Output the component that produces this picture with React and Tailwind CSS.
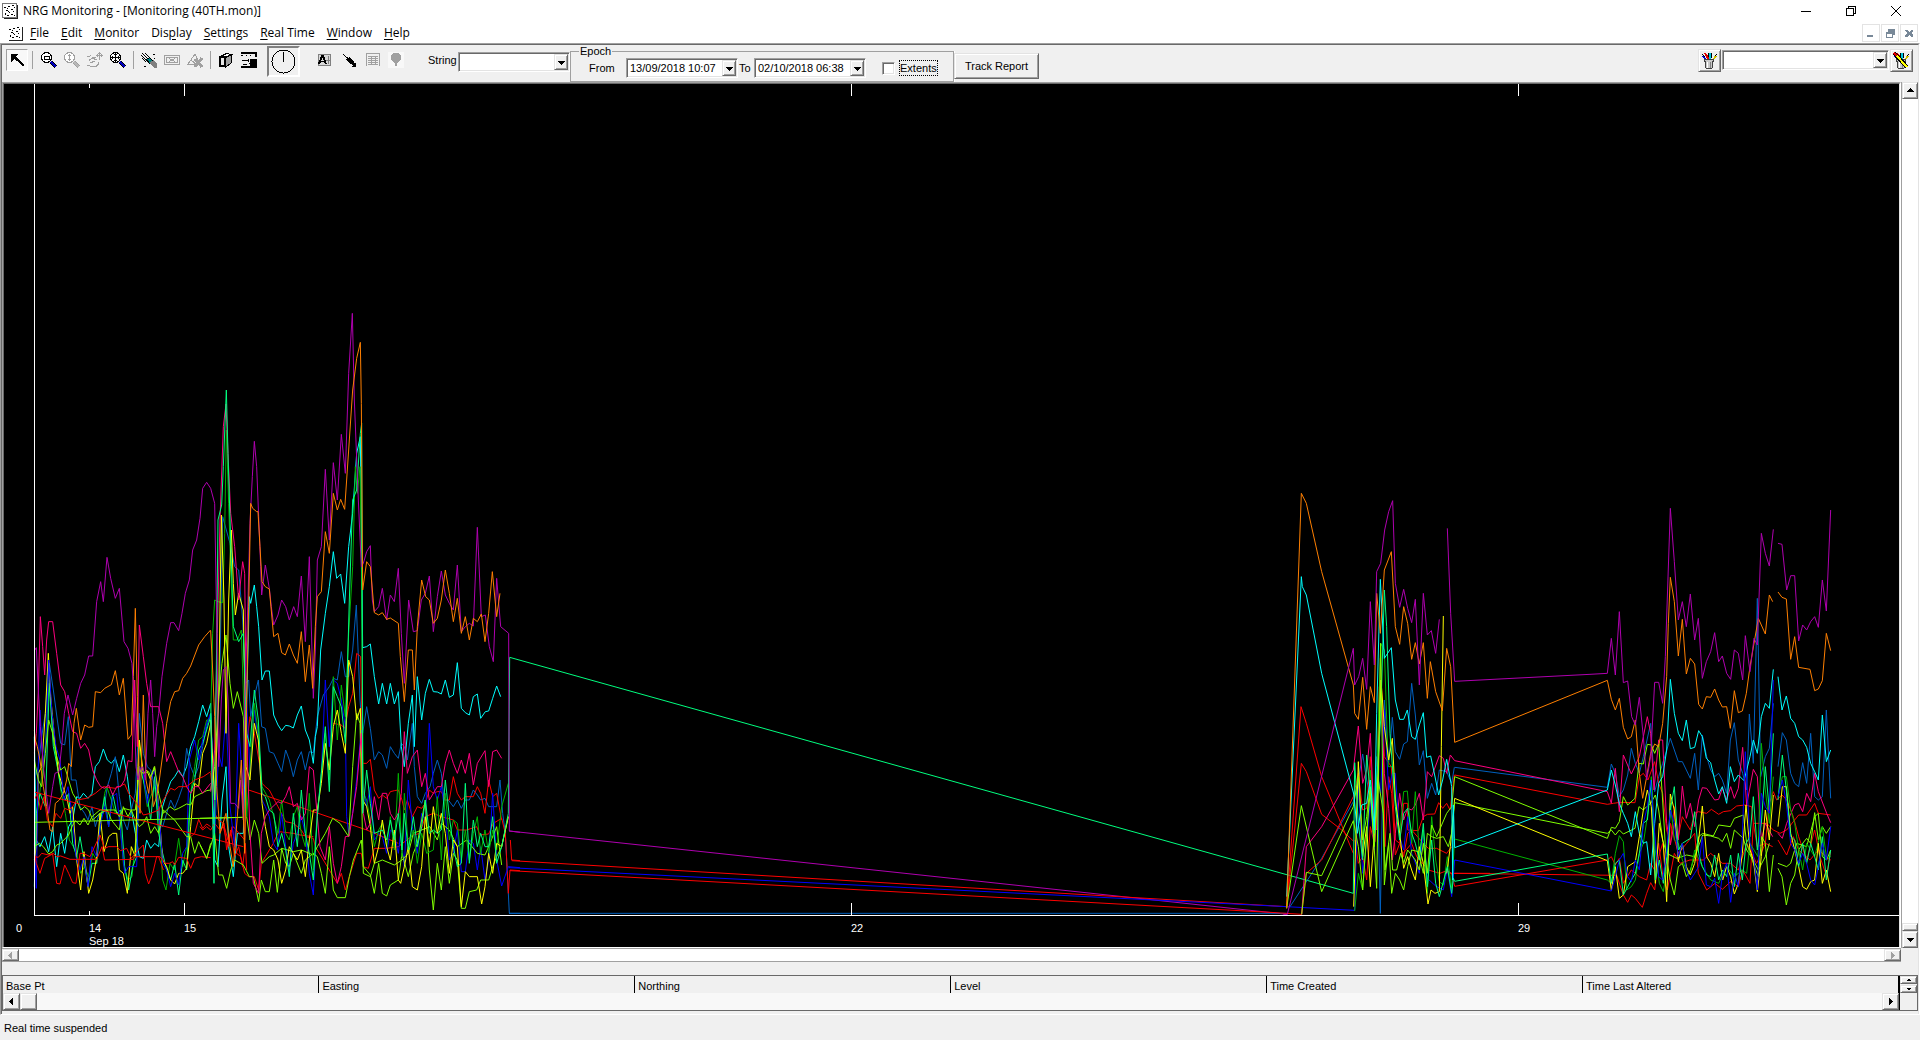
import { useState } from "react";
import clsx from "clsx";

const RAISED =
  "bg-[#f0f0f0] border border-t-[#e3e3e3] border-l-[#e3e3e3] border-r-[#696969] border-b-[#696969] shadow-[inset_1px_1px_#fff,inset_-1px_-1px_#a0a0a0]";
const SUNKEN =
  "bg-white border border-t-[#a0a0a0] border-l-[#a0a0a0] border-r-white border-b-white shadow-[inset_1px_1px_#696969,inset_-1px_-1px_#e3e3e3]";

const MENUS = [
  ["", "F", "ile"],
  ["", "E", "dit"],
  ["", "M", "onitor"],
  ["Dis", "p", "lay"],
  ["", "S", "ettings"],
  ["", "R", "eal Time"],
  ["", "W", "indow"],
  ["", "H", "elp"],
];

const COLUMNS = ["Base Pt", "Easting", "Northing", "Level", "Time Created", "Time Last Altered"];

const PURPLE = "#b000b0";
const ORANGE = "#ff8000";
const CYAN = "#00ffff";
const STEEL = "#0060c0";
const PINK = "#ff0080";
const RED = "#ff0000";
const LIME = "#80ff00";
const YELLOW = "#ffff00";
const GREEN = "#00b400";
const SPRING = "#00ff80";
const BLUE = "#0000ff";

// Each session is drawn from its own origin, three units to a pixel
const SESSIONS = [
  {
    x: 0,
    y: 580,
    lines: [
      [CYAN, "103,470 109,780 120,800 134,770 146,815 158,740 170,860 182,760 194,820 206,740 218,720 230,650 240,655 250,640 264,655 276,640 286,560 298,545 310,507 322,540 334,550 346,535 358,575 370,525 382,590 394,690 406,760 418,830 430,835 440,780 452,805 464,790 476,800 488,680 500,640 512,605 524,590 536,570 548,590 560,560 572,500 584,470 596,425 608,375 620,410 632,370"],
      [STEEL, "103,600 115,560 125,470 136,400 148,250 160,330 172,420 182,490 194,495 205,410 214,600 228,600 240,680 254,700 264,720 276,680 286,740 298,700 310,700 322,620 334,580 346,530 358,650 370,720 382,750 394,690 406,640 418,400 430,520 442,560 452,570 464,620 476,720 488,740 500,700 512,660 524,685 536,655 548,620 560,505 572,560 584,590 596,560 608,500 620,440 632,400"],
      [GREEN, "103,760 112,700 125,590 136,500 148,300 160,480 172,560 184,640 196,700 208,780 220,800 232,830 242,880 254,860 266,890 278,820 290,840 300,740 314,640 320,620 334,660 346,700 358,700 370,850 384,900 396,890 408,770 418,490 430,600 442,680 452,650 464,620 476,700 488,900 498,930 510,850 522,870 536,775 548,860 560,800 572,640 584,560 596,480 608,470 620,420 632,420"],
      [SPRING, "103,920 109,700 120,640 136,680 148,310 160,500 172,560 184,630 196,660 206,640 218,790 230,830 240,770 252,840 264,920 276,850 290,850 302,720 314,650 326,740 338,640 350,700 362,690 374,860 386,930 398,860 410,830 418,560 430,600 442,650 452,720 464,590 476,760 488,820 500,870 512,900 524,850 536,945 548,840 560,870 572,640 584,600 596,510 608,490 632,410"],
      [YELLOW, "103,840 109,800 115,580 125,560 136,400 145,220 152,350 164,480 176,580 188,620 200,650 210,700 218,680 230,840 242,930 252,815 266,940 278,900 290,830 300,700 312,815 326,770 338,760 350,760 358,870 370,880 382,940 394,800 406,830 414,560 418,480 430,580 440,570 452,600 464,560 476,680 488,840 500,860 512,900 524,912 536,880 548,880 560,865 572,740 584,610 596,620 608,520 620,490 632,430"],
      [BLUE, "103,790 109,925 114,580 120,390 130,560 138,480 146,240 156,400 168,500 180,540 192,660 204,620 216,700 228,830 240,870 252,830 264,920 276,800 290,830 302,730 314,680 326,740 338,650 350,640 362,760 374,880 386,860 398,860 410,860 418,560 430,580 442,670 452,600 464,570 476,680 488,850 500,870 512,920 524,880 536,915 548,820 560,800 568,540 584,480 596,540 608,480 620,430 632,400"],
      [LIME, "103,800 118,790 130,800 146,822 158,815 170,795 182,790 206,765 216,740 226,722 240,735 252,715 264,735 276,710 288,700 300,690 346,690 358,710 370,685 390,690 406,690 418,570 430,580 446,575 452,590 463,560 476,640 490,700 510,680 524,690 536,685 560,672 572,675 584,650 600,642 620,632 632,630"],
      [LIME, "103,540 115,600 125,620 136,520 146,420 158,460 170,530 182,570 194,560 206,600 218,640 230,660 242,690 254,680 266,690 278,720 300,700 322,690 334,720 358,750 370,680 384,710 394,690 406,720 418,740 430,730 440,710 452,760 464,740 476,760 490,690 512,710 524,720 560,770 572,770 584,820 596,785 620,835 632,790"],
      [RED, "103,660 112,640 122,690 132,650 142,720 158,740 168,700 182,715 194,685 206,690 218,680 230,660 260,655 286,640 310,620 346,625 374,612 386,640 410,670 430,705 452,700 476,690 490,660 512,625 524,630 536,620 560,620 584,600 610,590 632,575"],
      [RED, "103,830 115,832 125,820 146,825 160,820 170,830 182,828 210,838 290,838 306,800 314,840 400,838 404,830 480,830 496,850 508,850 518,845 524,855 536,832 560,835 572,865 584,835 604,830 632,833"],
      [RED, "103,820 109,850 120,880 134,835 158,822 170,910 180,912 194,855 206,880 218,908 228,910 240,820 250,820 270,830 300,765 314,805 326,800 350,800 362,812 380,805 394,835 410,815 430,795 436,880 446,912 458,880 470,830 476,830 490,870"],
      [RED, "572,770 584,760 596,718 608,745 620,732 632,740"],
      [RED, "103,636 400,715 730,800"],
      [LIME, "103,727 730,712"],
      [PINK, "103,520 109,460 115,330 121,110 128,200 134,285 140,180 146,125 158,125 170,220 182,315 194,335 206,400 218,455 230,460 242,505 254,490 266,510 278,570 290,600 302,620 314,625 326,615 338,645 350,620 362,620 374,600 384,542 396,545 404,300 412,500 418,135 430,230 440,310 452,380 476,380 488,430 500,545 512,515 524,545 536,575 548,590 560,620 572,640 584,620 596,620 608,640 632,610"],
      [ORANGE, "103,450 106,480 112,500 120,540 130,620 140,680 150,750 158,755 166,670 178,660 190,640 200,600 206,550 214,560 222,430 229,385 242,480 254,435 266,442 278,440 286,335 302,338 314,325 334,314 346,272 358,345 370,295 384,478 394,465 400,290 406,85 412,350 420,700 430,345 438,600 446,640 452,590 460,680 470,650 478,600 490,510 500,430 512,365 524,335 536,332 548,295 560,280 572,258 596,195 614,170 632,150"],
      [PURPLE, "103,212 109,203 115,330 121,440 130,560 146,700 158,620 165,580 177,575 185,500 193,400 204,345 218,405 230,355 242,310 254,285 266,228 278,228 290,65 302,5 310,65 321,-68 332,-5 346,55 358,25 372,185 384,205 396,250 402,350 408,560 414,600 420,570 428,560 436,600 444,400 452,300 458,400 464,530 470,440 476,400 486,290 500,190 512,128 522,128 536,152 546,100 556,40 568,0 578,-90 590,-120 600,-185"],
    ],
  },
  {
    x: 200,
    y: 600,
    lines: [
      [STEEL, "32,340 44,600 60,200 68,-250 90,-170 104,-100 116,-90 128,60 136,250 146,240 152,350 163,290 175,240 185,380 196,385 208,455 221,460 234,490 245,515 257,450 268,480 280,530 292,480 304,455 316,510 328,455 340,458 352,350 370,285 388,260 400,235 412,240 424,155 436,230 446,230 458,150 469,15 480,300 488,400 500,320 511,385 523,480 536,455 547,465 560,505 571,440 583,460 595,475 604,430 613,440 622,480 637,370 643,500 652,590 665,610 676,580 690,560 700,520 712,480 724,520 732,600 745,600 760,620 772,600 784,625 796,600 808,600 820,570 832,585 842,600 855,595 866,620 890,620 900,540 908,640 916,700 928,940 960,940"],
      [CYAN, "32,310 44,780 54,800 66,600 78,500 86,740 100,830 112,700 130,700 148,-10 152,10 163,-45 170,20 176,80 186,240 196,213 208,213 221,345 234,375 245,392 257,376 268,378 280,384 292,345 304,318 316,390 328,420 340,490 346,410 352,380 362,150 376,40 388,-40 400,-145 410,-65 422,-78 434,10 446,-160 458,-260 470,-440 481,-490 488,143 500,140 511,132 523,230 536,312 547,250 560,312 571,250 583,312 595,275 604,440 613,500 625,370 637,285 643,440 652,230 665,360 676,280 688,238 700,275 712,276 724,282 736,240 748,292 760,285 772,188 784,325 796,338 808,345 820,290 832,282 842,355 856,335 866,333 878,295 890,258 902,290"],
      [RED, "32,518 44,640 56,660 70,670 84,720 100,680 134,720 144,400 150,350 163,400 180,500 186,550 196,560 208,570 234,620 257,665 280,670 304,690 316,710 340,715 346,740 370,780 388,810 412,850 424,820 436,870 448,830 470,760 484,760 490,800 505,805 523,745 560,745 595,740 640,705 660,700 676,650 700,640 724,650 760,660 772,690 800,690 830,680 840,705 866,702 880,670 905,655 916,700 925,880 930,810 960,812"],
      [RED, "0,680 8,690 20,680 32,690 44,670 60,690 70,680 84,740 96,680 110,760 122,770 134,820 146,830 163,830 176,870 184,790 196,770 220,730 236,695 280,700 300,705 340,710"],
      [RED, "60,700 72,670 80,750 92,690 104,770 116,740 128,800 136,730 140,810"],
      [RED, "146,570 340,635 500,690 595,730"],
      [RED, "400,370 424,375 434,385 446,320 458,280 470,160 482,170 488,490 500,490 511,478 523,570 536,595 547,585 560,595 571,575 583,572 595,570 606,600 613,630 622,600 637,650 652,620 665,625 676,610 688,570 700,580 712,575 724,575 736,600 748,600 760,530 772,580 784,600 796,590 820,590 832,560 842,580 855,640 866,540 878,590 890,580 905,660"],
      [RED, "931,720 935,780 960,782"],
      [BLUE, "32,370 38,450 44,700 56,460 66,500 78,340 90,620 104,740 116,370 128,560 134,400 140,300 150,520 163,330 175,420 186,600 196,620 208,650 220,730 232,750 245,640 257,740 268,810 280,730 292,700 304,650 316,700 328,820 340,885 346,760 352,640 364,520 376,240 388,440 400,240 412,250 424,300 436,380 440,650 446,700 458,640 470,540 484,390 490,560 500,620 511,560 523,720 536,700 547,710 560,760 571,690 583,700 595,760 602,700 613,800 625,540 637,680 652,760 665,640 676,660 688,370 700,560 712,600 724,560 736,640 748,780 760,760 772,690 784,815 796,815 808,720 820,730 832,810 842,740 855,840 866,780 878,580 890,780 905,858 925,800 960,803"],
      [LIME, "0,735 20,775 44,700 56,825 68,825 80,865 92,810 104,780 130,795 148,830 160,830 176,905 184,840 196,875 208,875 221,780 232,877 245,745 257,790 268,800 280,760 304,820 316,780 340,760 352,770 364,820 376,880 388,740 400,870 412,893 436,893 448,830 460,780 484,720 490,800 511,825 523,880 536,790 547,880 560,888 571,855 595,840 606,760 625,830 640,760 652,730 676,600 688,810 700,930 712,790 724,870 736,740 748,850 760,760 772,780 784,925 796,925 808,875 830,870 842,840 866,840 878,800 890,770 905,740 925,650"],
      [LIME, "32,570 44,500 56,290 66,190 78,105 90,250 100,325 112,275 130,350 140,650 150,720 163,660 176,700 186,790 208,770 221,765 245,745 280,755 304,750 340,765 352,740 376,700 398,655 420,670 446,710 458,500 470,340 480,370 490,820 511,830 523,790 547,780 583,795 606,780 625,760 640,700 665,690 690,680 712,720 724,670 748,690 772,740 800,720 832,760 855,765 866,740 890,680 905,795"],
      [GREEN, "32,360 38,100 44,0 54,5 68,8 74,-200 79,-510 86,-290 92,-100 100,120 112,120 124,90 134,400 140,650 150,500 163,310 175,400 186,560 208,600 221,650 234,700 245,600 257,700 268,720 280,650 292,620 304,700 316,740 328,580 340,810 352,640 376,400 388,540 400,230 412,420 424,255 436,350 446,100 458,-100 466,-400 472,-320 480,-400 484,-130 490,580 500,600 511,660 523,740 536,690 547,670 560,740 571,650 583,750 595,520 606,770 613,580 625,740 640,690 652,790 665,700 680,760 700,750 712,590 724,780 736,580 748,720 760,660 772,670 784,780 796,690 808,780 820,700 832,650 842,760 855,690 866,760 878,690 890,750 905,620 925,550"],
      [YELLOW, "32,360 44,600 56,300 64,-255 72,0 78,400 86,0 94,-210 100,-50 106,45 116,-20 130,30 138,500 150,540 163,370 175,420 186,610 196,680 208,740 221,750 234,780 245,850 257,810 268,740 280,760 292,780 304,750 316,830 328,720 340,630 352,630 364,550 376,430 388,510 400,380 412,330 424,400 436,460 446,180 458,230 470,360 481,325 488,600 500,620 511,680 523,790 536,740 547,660 560,740 571,780 583,690 595,840 602,850 613,800 625,740 637,860 652,870 665,800 676,650 688,740 700,620 712,700 724,640 736,700 748,820 760,720 772,740 784,920 796,815 808,830 832,830 845,912 855,860 866,760 878,820 890,730 905,740 925,650"],
      [PINK, "32,575 44,450 52,100 60,-240 70,-520 78,-588 84,-440 92,-260 104,-160 116,0 128,-115 134,-80 140,420 150,700 160,850 176,880 184,700 196,650 208,630 234,605 245,610 257,590 268,560 280,620 292,610 304,660 316,640 328,500 340,510 352,650 360,740 376,780 388,680 400,790 412,850 424,800 436,710 448,708 458,640 470,560 484,400 490,640 500,690 511,670 523,590 536,660 547,580 560,580 571,640 583,660 595,640 604,580 613,395 622,520 637,470 652,450 665,560 676,520 688,600 700,580 712,560 724,560 736,490 748,450 760,490 772,520 784,480 796,520 808,460 820,555 832,490 855,452 866,560 878,455 890,450 905,475"],
      [SPRING, "32,340 42,850 48,300 54,-240 65,-285 70,-400 79,-630 84,-440 92,-180 100,80 116,125 130,100 140,400 150,440 163,270 175,360 186,580 196,590 208,630 221,640 234,740 245,700 257,750 268,830 280,640 292,740 304,570 316,700 328,760 340,840 352,650 364,520 376,380 388,575 400,260 412,290 424,320 436,430 448,0 458,-300 470,-330 481,-500 485,-530 488,640 500,510 511,610 523,700 547,690 560,720 571,660 583,720 595,640 606,750 613,640 625,750 640,650 652,740 665,680 676,600 688,700 700,690 712,700 724,690 736,540 748,650 760,740 772,800 784,790 796,550 808,790 820,660 832,740 842,700 855,740 866,740 878,650 890,790 905,740 925,640 929,172"],
      [LIME, "0,655 130,652"],
      [PURPLE, "32,-335 44,-290 50,60 56,500 64,300 70,210 78,200 84,300 92,610 104,610 116,625 122,540 130,660 134,300 144,0 150,-230 157,-370 163,-476 170,-400 176,-250 182,-100 185,-15 196,-105 208,-35 214,20 221,75 234,45 245,0 257,20 268,60 281,20 292,50 304,-72 316,125 328,-130 340,295 346,150 352,-120 364,-160 376,-392 388,-180 400,-412 412,-300 424,-497 436,-380 446,-680 457,-860 463,-600 475,-300 484,-100 490,-110 500,-145 511,-163 517,0 523,35 536,20 547,-35 560,60 571,-15 583,5 595,-95 604,100 613,250 626,0 640,95 652,92 664,0 676,-20 688,-72 700,95 712,-10 724,-87 736,-15 748,10 760,30 772,-105 784,95 796,80 808,70 820,78 832,-218 844,50 856,45 868,140 880,185 890,-65 902,80 926,100 928,693 960,697"],
      [PURPLE, "0,-245 8,-335 20,-353 32,-335"],
      [ORANGE, "32,92 38,210 44,350 50,560 60,700 78,640 90,740 100,800 112,650 124,480 134,760 140,300 146,20 152,-290 158,-275 170,-265 174,-265 180,-160 186,-55 196,-40 208,-33 221,110 234,100 245,158 256,165 268,132 280,165 292,190 304,95 316,245 328,135 338,265 346,80 352,-10 364,-25 376,-205 388,-140 400,-320 412,-270 422,-302 434,-272 446,-450 458,-630 470,-725 481,-773 484,-590 488,-30 500,-115 511,-100 523,38 536,45 547,38 560,58 571,54 595,70 601,170 613,305 625,150 637,150 643,270 652,80 665,-60 677,-10 688,0 700,70 712,55 724,0 736,-90 748,-20 760,65 772,-5 784,100 796,50 808,120 820,55 832,65 844,42 855,125 866,40 877,-85 890,50 900,-20"],
    ],
  },
  {
    x: 1270,
    y: 480,
    lines: [
      [PURPLE, "-2283,1053 -600,1233 52,1303"],
      [STEEL, "-2283,1300 50,1300"],
      [RED, "-2275,1142 0,1277 50,1280"],
      [RED, "-2280,1172 0,1297 95,1303"],
      [BLUE, "-2283,1163 50,1280 254,1291"],
      [SPRING, "-2281,532 0,1170 250,1240"],
      [STEEL, "60,1280 155,1135 250,965 265,900 278,822 290,900 301,950 313,1060 320,830 331,1300 343,660 356,850 367,712 376,815 389,838 401,792 412,785 425,610 436,705 448,855 460,812 472,955 485,910 497,945 508,870 530,875 545,910 553,862"],
      [RED, "50,1285 93,680 109,730 155,890 250,1120"],
      [RED, "50,1285 94,850 109,875 155,1003 215,1050 250,1083"],
      [RED, "95,1303 109,1180 155,1140 250,950 265,880 278,990 290,985 301,830 315,1085 331,535 343,830 364,860 376,1080 389,1090 401,970 413,970 413,1050 445,1052 460,1010 472,1003 494,1002 506,968 518,985 530,970 540,990 553,885"],
      [RED, "255,1080 265,1150 278,1130 290,1200 301,1040 313,1090 322,980 328,620 338,700 345,1100 356,890 365,940 376,1125 389,1090 401,1130 413,1060 425,1050 460,1090 475,1105 500,1105 530,1120 545,1100"],
      [RED, "400,1120 425,1090 440,1130 475,1170 510,1180 530,1172 545,1180 554,1219"],
      [RED, "540,1180 660,1180"],
      [PINK, "95,1303 109,1100 155,1040 250,870 265,738 278,910 290,870 301,760 313,1040 320,1050 332,600 343,880 356,985 367,1140 376,1060 389,940 401,1020 413,985 425,990 436,975 448,940 460,1020 472,875 485,890 508,827 520,835 530,880 541,825 554,842"],
      [BLUE, "254,1290 265,900 278,1180 290,1090 301,960 313,1110 320,860 332,940 343,690 356,930 367,880 376,880 389,1070 401,1110 413,1010 425,1120 448,1180 460,1050 472,1195 497,1218 520,1230 532,1165 545,1250 554,1140"],
      [GREEN, "254,1293 265,1180 278,1230 290,1070 301,870 313,1060 320,900 332,490 343,510 355,860 367,860 376,950 389,1060 401,935 412,933 425,1090 436,935 448,1120 460,1050 472,1240 485,1010 497,1140 508,1205 520,1215 532,1130 545,1225 554,1077"],
      [YELLOW, "251,1280 265,845 278,1130 290,1040 301,1220 313,1060 322,940 333,600 343,740 356,840 367,775 376,960 389,1060 401,1165 413,1130 425,1170 436,1200 448,1100 460,1150 474,1272 483,1230 495,1240 508,1235 514,800 520,408"],
      [YELLOW, "530,1180 541,1100 554,955"],
      [SPRING, "250,1240 254,848 265,1030 278,1140 290,825 301,940 313,1060 320,900 332,720 343,330 350,440 360,760 376,980 389,1080 401,1000 413,985 425,1060 436,1090 448,1140 460,1030 472,1220 485,1080 497,1210 508,1250 532,1160 545,1240 550,1195 554,1204"],
      [LIME, "50,1285 94,977 155,1235 250,1022 265,1100 278,1230 290,1060 301,930 313,1110 320,1225 332,490 343,1215 356,1090 365,1240 376,1180 389,1200 401,1230 413,1160 425,1110 445,1115 460,1180 472,1060 485,1070 500,1075 520,1070 535,1100 545,1060 554,968"],
      [LIME, "95,1303 109,1177 155,1187 250,980 265,890 278,1080 290,1010 301,920 313,1100 325,900 340,1000 345,1170 360,1060 368,1170 380,1170 392,1120 401,1150 413,1110 436,1140 448,1170 460,1090 472,1180 485,1035 500,1070 530,1000 545,980 554,890"],
      [CYAN, "50,1250 94,290 97,320 109,345 155,580 252,945 262,1060 275,975 290,970 301,900 313,1050 320,700 331,298 343,535 364,503 376,660 389,718 401,718 412,690 425,770 436,778 448,735 460,698 470,832 482,828 494,885 506,945 518,900 530,838 545,920 548,1200 550,975 554,1103"],
      [ORANGE, "50,1280 94,40 109,70 155,275 250,615 254,700 265,718 278,592 290,748 301,620 313,668 320,340 331,460 343,270 364,215 376,440 389,493 401,380 413,430 425,538 436,488 448,552 460,488 472,655 481,545 497,635 517,692 530,505 542,560 554,787"],
      [PURPLE, "40,1303 52,1303 250,505 254,615 266,590 278,535 290,628 301,365 313,555 320,275 332,250 344,150 356,95 368,62 376,310 389,382 401,328 413,385 425,428 436,358 448,615 460,340 472,465 484,452 497,520 508,418"],
      [PURPLE, "532,145 542,400 554,604"],
    ],
  },
  {
    x: 1580,
    y: 490,
    lines: [
      [STEEL, "-376,832 82,892 94,822 106,850 118,920 130,900 143,855 154,775 166,820 178,850 190,800 212,700 224,905 236,860 248,820 271,745 295,815 307,815 319,840 331,865 344,790 355,900 367,735 380,800 392,840 404,860 416,850 427,870 440,910 451,750 463,698 475,810 488,850 500,900 508,672 520,820 532,325 542,860 556,800 568,775 580,640"],
      [STEEL, "594,830 607,728 619,750 632,850 644,880 656,890 668,818 680,880 692,730 704,920 715,930 727,920 739,660 752,925"],
      [RED, "-376,855 82,943 100,940 120,937 165,938 178,860 190,850 204,870 224,815 236,880 248,910 260,1020 271,1060 283,950 295,1040 307,980 319,1000 331,1020 344,970 355,965 380,970 394,958 416,973 430,965 452,962 470,948 495,945 515,950 520,1000 560,1000 580,1020 600,1030 620,1020 644,990 656,975 680,975 704,940 715,970 752,975"],
      [RED, "-376,1150 110,1156 130,1215 143,1237 154,1215 166,1225 187,1252 200,1210 212,1178 224,1200 236,1100 248,1060 260,1150 271,1000 295,1090 320,1060 344,1030 355,1150 380,1200 405,1180 427,1198 452,1175 475,1190 488,1140 510,1180 520,1000 532,1070 556,1060 568,940 580,905 590,930 606,915 620,930 640,980 656,1040 680,1110 704,1020 720,1100 740,1160 752,1080"],
      [RED, "-376,1189 82,1110 94,1100 106,1125 118,1105 130,1180 154,1140 178,1160 200,1170 212,1120 224,1140 236,1060 250,1170 262,1200 283,1090 300,1120 330,1110 370,1110 392,1090 427,1120 452,1120 475,1140 500,1060 530,1120 556,1060 578,1070"],
      [RED, "594,1050 620,1095 640,1040 656,1080 690,1110 715,1080 752,1110"],
      [PINK, "-376,812 82,905 94,940 106,835 118,965 130,795 154,852 178,800 190,740 202,680 212,730 222,900 236,750 248,750 260,1000 271,1065 283,1000 295,1050 307,888 319,985 331,940 344,1010 356,930 367,893 380,895 404,930 416,928 427,895 440,930 452,890 463,925 475,895 488,772 500,945 520,838 532,860 544,1050 556,1000 578,1040"],
      [PINK, "594,1030 607,1045 620,1000 644,945 656,940 668,965 680,910 692,935 704,850 715,905 740,970 752,998"],
      [LIME, "-376,860 82,1045 94,1012 106,1015 118,995 130,920 143,945 165,925 177,820 190,822 202,763 214,765 224,790 236,762 246,900 258,1100 271,1170 283,1215 295,1130 307,1120 319,1160 331,1140 344,1100 356,1040 368,1030 400,1038 416,1005 451,1010 463,985 490,975 500,1060 520,1120 535,1160 545,1040 556,1060 568,1205 580,1095"],
      [LIME, "594,1135 606,1160 619,1245 632,1180 644,1155 656,1080 668,1060 680,1045 692,1060 704,968 715,1050 727,1010 739,1030 752,1010"],
      [LIME, "-376,938 82,1030 94,1020 106,1035 118,1020 130,1032 165,1015 177,950 190,960 200,950 212,940 226,915 236,960 248,1050 260,1090 290,1105 320,1095 344,1100 368,1035 392,1038 416,1045 427,1055 440,1030 452,1075 463,1020 490,1045 500,1080 520,1110 535,1140 556,1100 568,1060"],
      [LIME, "594,1120 620,1130 632,1120 650,1060 680,1070 704,980 715,970 727,1100 740,1110 752,1080"],
      [GREEN, "-376,1047 82,1170 94,1180 106,1090 118,1037 130,1055 140,1200 154,1190 166,1170 178,1090 190,1060 202,980 214,860 226,1080 238,1180 250,1205 262,1130 271,940 283,1050 295,1060 307,1110 319,1140 331,1150 344,1080 367,1130 392,1170 416,1180 440,1130 463,1160 487,1140 500,1150 510,1060 522,1080 534,1100 544,760 556,900 568,1000 580,860"],
      [GREEN, "594,920 607,860 619,860 632,960 644,1000 656,1080 668,1140 680,1060 704,1100 727,1010 739,1100 752,1100"],
      [CYAN, "-376,1073 82,900 94,840 106,885 118,940 130,970 143,1000 154,1040 166,965 178,1030 190,1060 200,1055 212,1155 224,1000 236,880 248,860 260,780 271,568 283,670 295,730 307,752 319,690 331,776 344,772 356,722 367,740 379,805 392,818 404,870 416,912 427,890 440,940 451,830 463,875 475,855 492,872 510,800 520,750 532,790 544,680 556,640 568,655 580,538"],
      [CYAN, "594,560 606,660 619,618 632,685 644,700 656,740 668,750 680,772 692,820 704,845 715,870 727,675 739,815 752,780"],
      [YELLOW, "-376,925 82,1112 94,1200 106,1130 118,1225 130,1215 143,1130 166,1115 178,1040 190,960 202,900 214,950 226,1180 238,1000 250,1060 260,1235 266,1060 271,912 283,960 295,1115 307,1060 319,1130 331,1155 344,1120 356,1050 367,948 380,1100 392,1120 404,1160 416,1090 428,1170 440,1130 452,1160 463,1212 475,1180 487,1090 498,945 510,1080 520,1110 532,1205 544,1100 556,960 568,1050 580,915"],
      [YELLOW, "594,1010 607,890 619,890 632,1030 644,1080 656,1130 668,1190 680,1198 692,1175 704,1170 715,1060 727,1180 739,1140 752,1205"],
      [SPRING, "-376,1174 82,1092 94,1180 106,1120 118,1110 130,1215 154,1170 166,1150 178,1090 190,1000 202,990 214,870 226,1170 238,1110 250,1180 262,1100 271,960 283,890 295,1080 307,1060 331,1045 344,965 356,1090 367,1130 380,1155 392,1160 404,1095 416,1170 428,1140 440,1160 452,1095 463,1190 475,1090 487,1170 498,1060 510,1040 520,920 532,1080 544,1000 556,830 568,960 580,730"],
      [SPRING, "594,930 607,795 619,900 632,1040 644,1050 656,1130 668,1060 680,1120 692,1060 704,1100 715,1140 727,1040 739,1170 752,1080"],
      [BLUE, "-376,1110 30,1190 94,1203 106,1160 118,1110 130,1090 143,1160 154,1175 166,1110 178,1140 190,1000 202,950 212,870 224,1030 236,1160 248,1170 260,1080 271,960 283,1000 295,1100 307,1060 319,1140 331,1170 344,1150 356,1130 367,1040 379,1185 392,1190 404,1165 416,1240 428,1150 440,1120 452,1237 463,1150 475,1190 487,1040 496,785 510,1060 520,1090 532,1200 544,910 556,950 568,970 580,570"],
      [BLUE, "594,920 607,870 619,940 632,1060 644,1080 656,1120 668,1090 680,1120 692,1170 704,1185 715,1130 727,1060 739,1110 752,1010"],
      [ORANGE, "-376,757 82,571 94,628 106,660 118,625 130,712 143,747 154,740 166,690 178,850 188,925 200,860 212,790 224,762 236,770 248,700 260,560 265,400 271,262 283,335 295,498 307,388 319,552 331,505 344,522 356,643 367,657 379,620 392,622 404,597 416,630 427,651 440,650 451,715 463,602 475,668 487,663 499,610 510,530 535,385 556,432 568,315 578,335"],
      [ORANGE, "594,306 606,322 619,327 632,508 644,440 656,532 690,538 704,602 715,597 727,572 739,430 752,482"],
      [PURPLE, "-376,574 30,553 82,550 94,445 106,555 118,365 130,578 143,573 155,680 166,705 178,622 190,740 200,870 212,800 224,577 236,577 248,640 256,500 271,55 283,215 295,390 307,335 319,410 331,312 344,450 355,385 367,565 379,515 392,485 404,428 416,515 427,498 440,550 452,568 463,480 475,490 488,570 496,437 510,545 522,445 532,465 544,130 556,190 568,228 580,118"],
      [PURPLE, "594,160 606,163 620,300 632,257 644,257 656,453 668,405 680,420 692,395 704,380 715,412 727,270 739,363 752,60"],
    ],
  },
];

const Icon = ({ w = 16, h = 16, children }) => (
  <svg width={w} height={h} viewBox={`0 0 ${w} ${h}`} fill="none" stroke="#000" shapeRendering="crispEdges" aria-hidden="true">
    {children}
  </svg>
);

const Arrow = ({ dir = "down", color = "#000", small = false }) => {
  const paths = {
    down: "M0 2h7v1H6v1H5v1H4v1H3V5H2V4H1V3H0z",
    up: "M0 5h7V4H6V3H5V2H4V1H3v1H2v1H1v1H0z",
    left: "M5 0v7H4V6H3V5H2V4H1V3h1V2h1V1h1V0z",
    right: "M2 0v7h1V6h1V5h1V4h1V3H5V2H4V1H3V0z",
  };
  const size = small ? 4 : 7;
  return (
    <svg width={size} height={size} viewBox="0 0 7 7" fill={color} shapeRendering="crispEdges" aria-hidden="true">
      <path d={paths[dir]} />
    </svg>
  );
};

const DotsIcon = ({ framed }) => (
  <Icon>
    {framed && <path fill="#fff" stroke="#777" d="M.5 .5h14v14h-14z" />}
    <path stroke="#222" d="M15.5 2v14M2 15.5h14" />
    <path
      fill="#000"
      stroke="none"
      d="M2 4h2v1H2zM6 3h2v1H6zM10 2h2v1h-2zM4 7h2v1H4zM6 8h1v1H6zM7 9h1v1H7zM9 6h2v1H9zM3 10h1v2H3zM9 11h2v1H9zM11 8h1v1h-1zM5 12h2v1H5zM12 12h1v1h-1zM12 4h1v1h-1zM5 5h1v1H5z"
    />
  </Icon>
);

const Magnifier = ({ color = "#000", handle = "#0000c0", children }) => (
  <Icon>
    <path stroke={color} strokeWidth="4" d="M10 10l5 5" />
    <path stroke={handle} strokeWidth="2" d="M10 10l5 5" />
    <g stroke={color}>
      <circle cx="5.5" cy="5.5" r="5" fill="#fff" />
      {children}
    </g>
  </Icon>
);

const PotIcon = ({ struck }) => (
  <Icon w={17} h={17}>
    <path stroke="#0000d0" strokeWidth="2" d="M2 4l4 5" />
    <path stroke="#e00000" strokeWidth="2" d="M4 1l4 7" />
    <path stroke="#00c8e0" strokeWidth="2" d="M9 1v7" />
    <path stroke="#000" d="M1 2l3 3M7 1l1 4M11 1l-1 5M16 2l-4 5" />
    <path stroke="#d0c000" strokeWidth="2" d="M15 4l-4 5" />
    <path fill="#c8c8c8" stroke="#404040" d="M3.5 7.5h9v2h-1v6l-1 1h-5l-1-1v-6h-1z" />
    <path stroke="#fff" d="M6.5 10v6" />
    <path stroke="#808080" d="M9.5 10v6" />
    {struck && (
      <>
        <path stroke="#000" strokeWidth="4" d="M1 1l13 14" />
        <path stroke="#ffff00" strokeWidth="2" d="M2 2l12 13" />
        <path stroke="#e00000" strokeWidth="2" d="M1 1l3 3" />
      </>
    )}
  </Icon>
);

const ToolButton = ({ label, pressed, disabled, children }) => (
  <button
    type="button"
    aria-label={label}
    disabled={disabled}
    className={clsx(
      "flex h-[22px] shrink-0 items-center justify-center",
      pressed ? "w-[22px] border border-t-[#a0a0a0] border-l-[#a0a0a0] border-r-white border-b-white bg-[#f8f8f8]" : "w-[23px]"
    )}
  >
    {children}
  </button>
);

const Separator = ({ first }) => (
  <span className={clsx("flex h-[18px] shrink-0 justify-center", first ? "w-[9px]" : "w-2")}>
    <span className="w-px bg-[#a0a0a0]" />
  </span>
);

const Combo = ({ id, label, className }) => (
  <div className={clsx("relative", SUNKEN, className)}>
    <select id={id} aria-label={label} className="block h-full w-full appearance-none bg-transparent px-1 outline-none">
      <option></option>
    </select>
    <span className={clsx("pointer-events-none absolute inset-y-px right-px flex w-[14px] items-center justify-center", RAISED)}>
      <Arrow />
    </span>
  </div>
);

const DateBox = ({ id, value, onChange }) => (
  <div className={clsx("flex h-[20px] w-[112px] items-stretch p-px", SUNKEN)}>
    <input
      id={id}
      value={value}
      onChange={(event) => onChange(event.target.value)}
      className="w-full min-w-0 bg-transparent pl-[2px] text-[11px] outline-none"
    />
    <button type="button" aria-label="Pick date" className={clsx("flex w-[14px] shrink-0 items-center justify-center", RAISED)}>
      <Arrow />
    </button>
  </div>
);

const TitleBar = () => (
  <header className="flex h-[22px] items-center justify-between bg-white pr-[2px] pl-[2px] font-['Open_Sans','Noto_Sans',sans-serif] text-[12px]">
    <div className="flex items-center gap-[5px]">
      <DotsIcon framed />
      <h1>NRG Monitoring - [Monitoring (40TH.mon)]</h1>
    </div>
    <div className="flex">
      <button type="button" aria-label="Minimize" className="flex w-[45px] justify-center">
        <Icon w={10} h={10}><path d="M0 5.5h10" /></Icon>
      </button>
      <button type="button" aria-label="Restore" className="flex w-[45px] justify-center">
        <Icon w={10} h={10}><path d="M.5 2.5h7v7h-7zM2.5 2V.5h7v7H8" /></Icon>
      </button>
      <button type="button" aria-label="Close" className="flex w-[45px] justify-center">
        <Icon w={10} h={10}><path shapeRendering="auto" d="M0 0l10 10M10 0L0 10" /></Icon>
      </button>
    </div>
  </header>
);

const MenuBar = () => (
  <nav className="flex h-[21px] items-start justify-between bg-white pr-[2px] pl-[7px] font-['Open_Sans','Noto_Sans',sans-serif] text-[12px]">
    <div className="flex h-[21px] items-center">
      <DotsIcon />
      <ul className="ml-[7px] flex gap-3 leading-[18px]">
        {MENUS.map(([before, key, after]) => (
          <li key={after}>
            <button type="button">
              {before}
              <u className="underline-offset-2">{key}</u>
              {after}
            </button>
          </li>
        ))}
      </ul>
    </div>
    <div className="flex gap-px pt-[2px]">
      {[
        ["Minimize window", "M4 10h6v2H4z"],
        ["Restore window", "M6 4h7v6h-2V7H6zM4 7h7v6H4zM5 9v3h5V9z"],
        ["Close window", "M4 5h2l2 2 2-2h2v1l-2 2 2 2v2h-2l-2-2-2 2H4v-2l2-2-2-2z"],
      ].map(([label, d]) => (
        <button key={label} type="button" aria-label={label} className="flex h-[18px] w-[18px] items-center justify-center border border-[#e3e3e3]">
          <Icon>
            <path fill="#788898" stroke="none" fillRule="evenodd" d={d} />
          </Icon>
        </button>
      ))}
    </div>
  </nav>
);

const Toolbar = () => {
  const [from, setFrom] = useState("13/09/2018 10:07");
  const [to, setTo] = useState("02/10/2018 06:38");

  return (
    <div className="flex h-[37px] shrink-0 items-start pl-1" role="toolbar">
      <div className="flex h-[30px] shrink-0 items-center">
        <ToolButton label="Select" pressed>
          <Icon>
            <path fill="#000" stroke="none" d="M2 2h7v1H8v1H7v1h1v1h1v1h1v1h1v1h1v1h1v1h1v1h1v2h-2v-1h-1v-1h-1v-1h-1v-1H9v-1H8V9H7V8H6V7H5v1H4v1H3v1H2z" />
          </Icon>
        </ToolButton>
        <Separator first />
        <ToolButton label="Zoom window">
          <Magnifier><path d="M3 4.5h5.5v3h-5v-3" /></Magnifier>
        </ToolButton>
        <ToolButton label="Zoom vertical" disabled>
          <Magnifier color="#a0a0a0" handle="#b8b8b8"><path d="M5.5 2v7M4 3.5h3M4 7.5h3" /></Magnifier>
        </ToolButton>
        <ToolButton label="Pan" disabled>
          <Icon>
            <path stroke="#a0a0a0" d="M0 4.5h2l2-1M2 8.5l4-3h3M3 10.5l5-1M0 13.5h2l2 1h5l2-2v-3M5 6.5l5 1M12.5 0v8M9 3.5h7M11 1.5h3M10.5 2v3M14.5 2v3" />
          </Icon>
        </ToolButton>
        <ToolButton label="Zoom extents">
          <Magnifier><path d="M5.5 1v9M1 5.5h9M4 2.5h3M4 8.5h3M2.5 4v3M8.5 4v3" /></Magnifier>
        </ToolButton>
        <Separator />
        <ToolButton label="Redraw">
          <Icon>
            <path stroke="#000" d="M1 1l6 6M0 3l6 6M4 1l5 5M1 6l4 4" />
            <path fill="#008080" d="M5.5 7.5l3-2 3 3-3 3z" />
            <path fill="#808080" stroke="none" d="M10 9l3-1 3 4v4h-3l-4-4z" />
            <path d="M12 2.5h2M3 14.5h2M13 6.5h1" />
          </Icon>
        </ToolButton>
        <ToolButton label="Envelope" disabled>
          <Icon><path stroke="#a0a0a0" d="M.5 3.5h15v9H.5zM2.5 5.5h11v5h-11zM3 5l10 6M13 5L3 11" /></Icon>
        </ToolButton>
        <ToolButton label="Remove triangle" disabled>
          <Icon>
            <path stroke="#a0a0a0" d="M0 12.5h11M1 12l7-10 3 6M4 8l6 5" />
            <path stroke="#a0a0a0" strokeWidth="3" d="M8 7l7 8M15 6l-7 9" />
          </Icon>
        </ToolButton>
        <Separator />
        <ToolButton label="Solid view">
          <Icon>
            <path fill="#a0a0a0" d="M7.5 5.5l6-3v8l-6 5z" />
            <path fill="#fff" d="M2.5 4.5l6-3 5 1-6 3z" />
            <path fill="#e8e8e8" strokeWidth="2" d="M2 5h5v9H2z" />
          </Icon>
        </ToolButton>
        <ToolButton label="Levels">
          <Icon>
            <path fill="#000" stroke="none" d="M0 0h16v2H0zM0 3h2v1H0zM5 3h1v1H5zM9 3h1v1H9zM14 2h2v3h-2zM1 8h6v1H1zM7 7h1v3H7zM9 7h7v7H9zM8 11h2v1H8zM0 14h16v2H0zM2 12h4v1H2z" />
          </Icon>
        </ToolButton>
      </div>

      <button
        type="button"
        aria-label="Clock"
        className="mt-px ml-[7px] flex h-[31px] w-[33px] shrink-0 items-center justify-center border-2 border-t-[#808080] border-l-[#808080] border-r-white border-b-white"
      >
        <Icon w={25} h={25}>
          <circle cx="12.5" cy="12.5" r="11.5" />
          <path d="M12.5 3v10" />
        </Icon>
      </button>

      <div className="ml-3 flex h-[30px] shrink-0 items-center">
        <ToolButton label="Annotate">
          <Icon>
            <path fill="#d8d8d8" stroke="#808080" d="M2.5 2.5h12v11h-12z" />
            <path strokeWidth="2" d="M3 12l3-8h1l3 8" />
            <path d="M4 9.5h5" />
            <path stroke="#808080" d="M12.5 4v8M10 8.5h4" />
          </Icon>
        </ToolButton>
        <span className="w-[3px]" />
        <ToolButton label="Vector">
          <Icon>
            <path d="M1 2l13 12" />
            <path fill="#000" stroke="none" d="M4 7h3V5h1l4 5 1 2v-1h1v4h-4v-1h1l-2-2-5-4z" />
          </Icon>
        </ToolButton>
        <ToolButton label="Table" disabled>
          <Icon><path stroke="#a0a0a0" d="M1 1.5h14M1.5 1v13M14.5 1v13M3 4.5h10M3 6.5h10M3 8.5h10M3 10.5h10M3 12.5h10M6.5 4v9M10.5 4v9" /></Icon>
        </ToolButton>
        <ToolButton label="Light" disabled>
          <Icon>
            <path fill="#f8f8f8" stroke="none" d="M0 0h16v16H0z" />
            <path fill="#a0a0a0" stroke="none" d="M5 1h6v1h1v1h1v5h-1v1h-1v1h-1v1h-1v3H7v-3H6v-1H5V9H4V8H3V3h1V2h1z" />
          </Icon>
        </ToolButton>
      </div>

      <label htmlFor="string" className="ml-[21px] w-[30px] shrink-0 pt-[8px] leading-[14px]">String</label>
      <Combo id="string" className="mt-[7px] h-[20px] w-[112px] shrink-0" />

      <fieldset className="h-[37px] w-[384px] shrink-0 border border-[#a0a0a0] pl-[18px] shadow-[1px_0_#fff]">
        <legend className="-ml-[10px] h-[12px] px-px leading-[12px]">Epoch</legend>
        <div className="flex items-center pt-px">
          <label htmlFor="from" className="w-[37px]">From</label>
          <DateBox id="from" value={from} onChange={setFrom} />
          <label htmlFor="to" className="w-[16px] pl-px">To</label>
          <DateBox id="to" value={to} onChange={setTo} />
          <input id="extents" type="checkbox" className={clsx("ml-4 h-[13px] w-[13px] appearance-none", SUNKEN)} />
          <label htmlFor="extents" className="ml-1 border border-dotted border-black leading-[14px]">Extents</label>
        </div>
      </fieldset>
      <button type="button" className={clsx("mt-[8px] h-[26px] w-[85px] shrink-0", RAISED)}>Track Report</button>

      <div className="ml-auto flex items-start gap-px pt-1 pr-[5px]">
        <button type="button" aria-label="Pens" className={clsx("flex h-[23px] w-[23px] items-center justify-center", RAISED)}>
          <PotIcon />
        </button>
        <Combo id="pen" label="Pen" className="mt-px h-[20px] w-[167px]" />
        <button type="button" aria-label="Edit pens" className={clsx("flex h-[23px] w-[23px] items-center justify-center", RAISED)}>
          <PotIcon struck />
        </button>
      </div>
    </div>
  );
};

const Chart = () => (
  <svg
    viewBox="4 84 1895 863"
    className="block h-full w-full bg-black"
    fill="none"
    strokeWidth="1"
    strokeLinejoin="bevel"
    shapeRendering="crispEdges"
    role="img"
    aria-label="Monitoring graph"
  >
    {SESSIONS.map((session) => (
      <g key={session.x} transform={`translate(${session.x} ${session.y}) scale(0.33333)`} strokeWidth="3">
        {session.lines.map(([color, points], idx) => (
          <polyline key={idx} points={points} stroke={color} />
        ))}
      </g>
    ))}
    <path
      stroke="#fff"
      d="M34.5 84v831.5H1899M89.5 84v4M184.5 84v12M851.5 84v12M1518.5 84v12M89.5 911v4M184.5 903v12M851.5 903v12M1518.5 903v12"
    />
    <g fill="#fff" stroke="none" className="text-[11px]">
      <text x="16" y="932">0</text>
      <text x="89" y="932">14</text>
      <text x="184" y="932">15</text>
      <text x="851" y="932">22</text>
      <text x="1518" y="932">29</text>
      <text x="89" y="945">Sep 18</text>
    </g>
  </svg>
);

const Workspace = () => (
  <main className="flex min-h-0 flex-1">
    <div className="flex min-w-0 flex-1 flex-col">
      <div className="min-h-0 flex-1 border-t border-l border-r border-b border-t-[#a0a0a0] border-l-[#a0a0a0] border-r-white border-b-white">
        <div className="h-full border-t border-l border-r border-t-[#696969] border-l-[#696969] border-r-[#e3e3e3]">
          <Chart />
        </div>
      </div>
      <div className="flex h-[14px] shrink-0 border-y border-[#a0a0a0] bg-white">
        <button type="button" aria-label="Scroll left" disabled className={clsx("flex w-[17px] items-center justify-center", RAISED)}>
          <Arrow dir="left" color="#a0a0a0" />
        </button>
        <div className="flex-1" />
        <button type="button" aria-label="Scroll right" disabled className={clsx("flex w-[17px] items-center justify-center", RAISED)}>
          <Arrow dir="right" color="#a0a0a0" />
        </button>
      </div>
    </div>
    <div className="mb-[14px] flex w-[17px] shrink-0 flex-col border-l border-[#a0a0a0] bg-white">
      <button type="button" aria-label="Scroll up" className={clsx("flex h-[17px] items-center justify-center", RAISED)}>
        <Arrow dir="up" />
      </button>
      <div className="flex-1" />
      <div className={clsx("h-[8px]", RAISED)} />
      <button type="button" aria-label="Scroll down" className={clsx("flex h-[17px] items-center justify-center", RAISED)}>
        <Arrow />
      </button>
    </div>
  </main>
);

const PointsTable = () => (
  <section className="mt-[13px] mb-[3px] flex shrink-0 border border-[#696969]">
    <div className="min-w-0 flex-1">
      <table className="w-full table-fixed border-collapse">
        <thead>
          <tr>
            {COLUMNS.map((name) => (
              <th key={name} scope="col" className="h-[17px] border-r border-black p-0 pl-[3px] text-left align-bottom leading-[14px] font-normal">
                {name}
              </th>
            ))}
          </tr>
        </thead>
      </table>
      <div className="flex h-[17px] bg-[#f8f8f8]">
        <button type="button" aria-label="Previous columns" className={clsx("flex w-[17px] items-center justify-center", RAISED)}>
          <Arrow dir="left" />
        </button>
        <div className={clsx("w-[17px]", RAISED)} />
        <div className="flex-1" />
        <button type="button" aria-label="Next columns" className={clsx("flex w-[17px] items-center justify-center", RAISED)}>
          <Arrow dir="right" />
        </button>
      </div>
    </div>
    <div className="w-[18px] shrink-0 border-l border-black">
      <button type="button" aria-label="Previous row" className={clsx("flex h-[8px] w-full items-center justify-center", RAISED)}>
        <Arrow dir="up" small />
      </button>
      <button type="button" aria-label="Next row" className={clsx("mt-px flex h-[8px] w-full items-center justify-center", RAISED)}>
        <Arrow small />
      </button>
    </div>
  </section>
);

const App = () => (
  <div className="flex h-screen flex-col bg-[#f0f0f0] font-['Liberation_Sans',Arial,sans-serif] text-[11px] text-black">
    <TitleBar />
    <MenuBar />
    <div className="flex min-h-0 flex-1 flex-col border border-t-[#a0a0a0] border-l-[#a0a0a0] border-r-white border-b-white">
      <div className="flex min-h-0 flex-1 flex-col border-t border-l border-r border-t-[#696969] border-l-[#696969] border-r-[#e3e3e3]">
        <Toolbar />
        <Workspace />
        <PointsTable />
      </div>
    </div>
    <footer className="flex h-[25px] shrink-0 items-center pt-[2px] pl-1">Real time suspended</footer>
  </div>
);

export default App;
